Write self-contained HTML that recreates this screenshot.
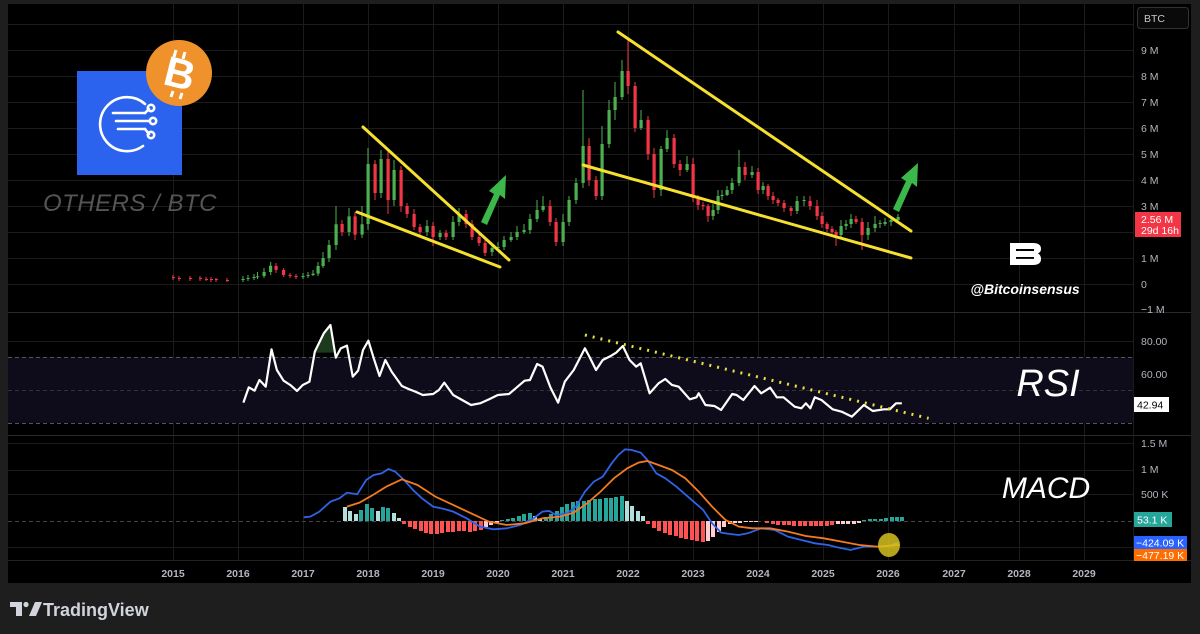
<!DOCTYPE html>
<html><head><meta charset="utf-8"><style>
html,body{margin:0;padding:0;background:#1e1e1e;width:1200px;height:634px;overflow:hidden}
svg text{font-family:"Liberation Sans",sans-serif}
</style></head><body>
<svg width="1200" height="634" viewBox="0 0 1200 634" xmlns="http://www.w3.org/2000/svg">
<rect x="0" y="0" width="1200" height="634" fill="#1e1e1e"/>
<rect x="8" y="4" width="1183" height="579" fill="#000"/>
<!-- grid -->
<g stroke="#1b1b1b" stroke-width="1">
<path d="M8 24.5H1133M8 50.5H1133M8 76.5H1133M8 102.5H1133M8 128.5H1133M8 154.5H1133M8 180.5H1133M8 206.5H1133M8 232.5H1133M8 258.5H1133M8 284.5H1133M8 341.5H1133M8 374.5H1133M8 443.5H1133M8 470.5H1133M8 494.5H1133M8 547.5H1133"/>
<path d="M173.5 4V560M238.5 4V560M303.5 4V560M368.5 4V560M433.5 4V560M498.5 4V560M563.5 4V560M628.5 4V560M693.5 4V560M758.5 4V560M823.5 4V560M888.5 4V560M954.5 4V560M1019.5 4V560M1084.5 4V560"/>
</g>
<line x1="8" y1="312.5" x2="1191" y2="312.5" stroke="#2a2a2a"/>
<line x1="8" y1="435.5" x2="1191" y2="435.5" stroke="#2a2a2a"/>
<line x1="8" y1="560.5" x2="1191" y2="560.5" stroke="#222"/>
<line x1="1133.5" y1="4" x2="1133.5" y2="560" stroke="#1c1c1c"/>
<!-- RSI band -->
<rect x="8" y="357" width="1125" height="66" fill="#0e0c1a"/>
<line x1="8" y1="357.5" x2="1133" y2="357.5" stroke="#555" stroke-dasharray="4,3"/>
<line x1="8" y1="390.5" x2="1133" y2="390.5" stroke="#333" stroke-dasharray="4,3"/>
<line x1="8" y1="423.5" x2="1133" y2="423.5" stroke="#555" stroke-dasharray="4,3"/>
<line x1="8" y1="521.5" x2="1133" y2="521.5" stroke="#444" stroke-dasharray="4,3"/>
<!-- candles: red -->
<g fill="#f23645" stroke="#f23645">
<path stroke-width="1" fill="none" d="M173 275V280M179 276V281M190 276V281M200 276V281M206 277V281M211 277V282M216 278V282M227 278V282M276 263V273M283.7 268V277M290 273V278M296 274V279M342 220V236M355 212V240M375 160V200M388 150V214M401 166V212M407 203V218M414 209V230M420 224V236M433 222V246M446 230V240M466 210V228M472 220V240M479 234V246M485 240V256M550 200V226M556 218V246M589 138V186M596 176V200M628 40V94M635 82V132M648 116V160M654 148V198M674 134V168M680 160V176M693 158V202M698 195V210M703 202V210M708 204V222M745 162V180M758 168V194M768 184V200M773 192V204M778 198V206M784 200V212M791 206V216M810 196V210M817 200V220M822 212V228M827 222V232M832 226V234M836 230V246M856 216V224M862 218V250"/>
<path stroke="none" d="M172 277h3v1h-3zM178 278h3v1h-3zM189 278h3v1h-3zM199 278h3v1h-3zM205 279h3v1h-3zM210 279h3v1h-3zM215 279h3v1h-3zM226 280h3v1h-3zM274.5 266h3.2v4h-3.2zM282 270h3.2v5h-3.2zM288.5 275h3.2v1h-3.2zM294.5 276h3.2v1h-3.2zM340.5 224h3.2v8h-3.2zM353.5 216.4h3.2v18.2h-3.2zM373.5 164h3.2v29h-3.2zM386.5 159h3.2v41h-3.2zM399.5 170h3.2v36h-3.2zM405.5 206h3.2v8h-3.2zM412.5 214h3.2v13h-3.2zM418.5 227h3.2v5h-3.2zM431.5 226h3.2v11h-3.2zM444.5 233h3.2v4h-3.2zM464.5 214h3.2v10h-3.2zM470.5 224h3.2v13h-3.2zM477.5 237h3.2v6h-3.2zM483.5 243h3.2v10h-3.2zM548.5 206h3.2v16h-3.2zM554.5 222h3.2v20h-3.2zM587.5 146h3.2v34h-3.2zM594.5 180h3.2v16h-3.2zM626.5 71h3.2v15h-3.2zM633.5 86h3.2v42h-3.2zM646.5 120h3.2v34h-3.2zM652.5 154h3.2v36h-3.2zM672.5 138h3.2v26h-3.2zM678.5 164h3.2v6h-3.2zM691.5 164h3.2v34h-3.2zM696.5 198h3.2v7h-3.2zM701.5 205h3.2v1h-3.2zM706.5 206h3.2v10h-3.2zM743.5 167h3.2v8h-3.2zM756.5 172h3.2v18h-3.2zM766.5 186h3.2v10h-3.2zM771.5 196h3.2v4h-3.2zM776.5 200h3.2v3h-3.2zM782.5 203h3.2v5h-3.2zM789.5 208h3.2v3h-3.2zM808.5 201h3.2v5h-3.2zM815.5 206h3.2v10h-3.2zM820.5 216h3.2v8h-3.2zM825.5 224h3.2v5h-3.2zM830.5 229h3.2v3h-3.2zM834.5 232h3.2v3h-3.2zM854.5 219h3.2v3h-3.2zM860.5 222h3.2v13h-3.2z"/>
</g>
<!-- candles: green -->
<g fill="#4caf50" stroke="#4caf50">
<path stroke-width="1" fill="none" d="M243 276V282M248 275V281M254 274V280M257.5 272V279M264 268V278M270.7 262V275M303 273V279M308 272V278M313 270V276M318 262V276M323 252V268M329 240V262M336 206V250M349 208V236M362 206V238M368 148V230M381 150V198M394 160V206M427 220V236M440 230V240M453 216V240M459 208V226M492 244V256M498 242V250M504 236V250M511 232V242M517 226V240M524 224V234M530 214V234M537 200V222M543 196V212M563 214V246M569 196V226M576 178V204M583 90V188M602 126V200M609 100V148M615 82V120M622 60V100M641 110V130M661 146V196M667 130V152M687 156V172M713 204V220M718 190V214M722 190V200M727 186V196M732 178V194M739 150V186M752 166V178M763 182V194M797 196V214M804 196V206M841 220V238M846 220V230M851 214V228M868 222V240M875 216V232M880 220V228M885 218V226M891 216V226M898 214V222"/>
<path stroke="none" d="M241.5 279h3.2v1h-3.2zM246.5 278h3.2v1h-3.2zM252.5 277h3.2v1h-3.2zM256 276.2h3.2v1h-3.2zM262.5 272h3.2v4h-3.2zM269 265.8h3.2v6.2h-3.2zM301.5 276h3.2v1h-3.2zM306.5 275h3.2v1h-3.2zM311.5 273.6h3.2v1.4h-3.2zM316.5 266h3.2v7.6h-3.2zM321.5 258h3.2v8h-3.2zM327.5 245h3.2v13h-3.2zM334.5 224.2h3.2v20.8h-3.2zM347.5 216.4h3.2v15.6h-3.2zM360.5 224.2h3.2v10.4h-3.2zM366.5 164h3.2v60h-3.2zM379.5 159h3.2v34h-3.2zM392.5 170h3.2v30h-3.2zM425.5 226h3.2v6h-3.2zM438.5 233h3.2v4h-3.2zM451.5 222h3.2v15h-3.2zM457.5 214h3.2v8h-3.2zM490.5 248h3.2v4h-3.2zM496.5 247h3.2v1h-3.2zM502.5 240h3.2v7h-3.2zM509.5 237h3.2v3h-3.2zM515.5 232h3.2v5h-3.2zM522.5 230h3.2v2h-3.2zM528.5 219h3.2v11h-3.2zM535.5 210h3.2v9h-3.2zM541.5 206h3.2v4h-3.2zM561.5 222h3.2v20h-3.2zM567.5 200h3.2v22h-3.2zM574.5 183h3.2v17h-3.2zM581.5 146h3.2v37h-3.2zM600.5 144h3.2v52h-3.2zM607.5 110h3.2v34h-3.2zM613.5 97h3.2v13h-3.2zM620.5 71h3.2v26h-3.2zM639.5 120h3.2v8h-3.2zM659.5 149h3.2v41h-3.2zM665.5 138h3.2v11h-3.2zM685.5 164h3.2v6h-3.2zM711.5 210h3.2v6h-3.2zM716.5 196h3.2v14h-3.2zM720.5 195h3.2v1h-3.2zM725.5 190h3.2v5h-3.2zM730.5 183h3.2v7h-3.2zM737.5 167h3.2v16h-3.2zM750.5 172h3.2v3h-3.2zM761.5 186h3.2v4h-3.2zM795.5 201h3.2v10h-3.2zM802.5 200h3.2v1h-3.2zM839.5 226h3.2v9h-3.2zM844.5 224h3.2v2h-3.2zM849.5 219h3.2v5h-3.2zM866.5 228h3.2v7h-3.2zM873.5 224h3.2v4h-3.2zM878.5 223h3.2v1h-3.2zM883.5 222h3.2v2h-3.2zM889.5 220h3.2v2h-3.2zM896.5 217h3.2v3h-3.2z"/>
</g>
<!-- trendlines -->
<g stroke="#f5e030" stroke-width="3" stroke-linecap="round">
<line x1="363" y1="127" x2="509" y2="260"/>
<line x1="357" y1="212" x2="500" y2="267"/>
<line x1="618" y1="32" x2="911" y2="231"/>
<line x1="583" y1="165" x2="911" y2="258"/>
</g>
<g fill="#3cb84a">
<path d="M481 222 L494 194 L489 191 L506 175 L505 199 L500 195 L487 225 Z"/>
<path d="M893 209 L906 181 L901 178 L918 163 L917 187 L912 183 L899 212 Z"/>
</g>
<!-- RSI -->
<g transform="translate(230,310) scale(0.4464,0.3333)">
<polygon points="190,128 210,70 225,45 236,128" fill="#1d3a1d"/>
<polyline fill="none" stroke="#fff" stroke-width="2.2" vector-effect="non-scaling-stroke" stroke-linejoin="round" points="30,278 42,232 55,242 66,210 80,230 93,118 105,180 120,212 135,225 150,243 163,225 178,215 190,125 210,70 225,45 237,143 248,115 262,107 275,200 287,182 298,120 310,92 322,145 335,198 348,150 362,185 385,228 400,237 415,245 432,255 455,252 468,240 480,218 500,255 540,285 560,280 580,268 600,255 625,252 640,235 660,212 672,210 688,162 700,170 718,233 735,278 750,215 770,180 795,115 805,140 820,180 835,150 850,140 865,128 880,108 895,150 910,170 920,160 940,250 960,220 975,207 990,225 1005,230 1030,268 1045,262 1050,250 1065,285 1085,288 1100,300 1125,252 1135,255 1150,270 1175,228 1190,250 1210,233 1225,262 1240,262 1265,290 1280,295 1290,280 1300,295 1310,262 1325,270 1350,298 1370,305 1393,320 1420,285 1440,303 1465,298 1478,298 1492,280 1505,280"/>
<line x1="795" y1="75" x2="1565" y2="325" stroke="#e8e040" stroke-width="3" stroke-dasharray="2,6" vector-effect="non-scaling-stroke"/>
</g>
<!-- MACD histogram -->
<path fill="#b2dfdb" d="M343 507h4v14h-4zM348 511h4v10h-4zM354 514h4v7h-4zM376 511h4v10h-4zM392 513h4v8h-4zM397 518h4v3h-4zM533 516h4v5h-4zM538 519h4v2h-4zM625 501h4v20h-4zM630 506h4v15h-4zM636 511h4v10h-4zM641 516h4v5h-4z"/>
<path fill="#26a69a" d="M359 510h4v11h-4zM365 504h4v17h-4zM370 508h4v13h-4zM381 507h4v14h-4zM386 508h4v13h-4zM500 520h4v1h-4zM506 519h4v2h-4zM511 518h4v3h-4zM517 516h4v5h-4zM522 514h4v7h-4zM528 513h4v8h-4zM544 517h4v4h-4zM549 514h4v7h-4zM555 511h4v10h-4zM560 507h4v14h-4zM565 504h4v17h-4zM571 502h4v19h-4zM576 501h4v20h-4zM582 501h4v20h-4zM587 500h4v21h-4zM593 499h4v22h-4zM598 499h4v22h-4zM604 498h4v23h-4zM609 498h4v23h-4zM614 497h4v24h-4zM620 496h4v25h-4zM862 520h4v1h-4zM868 519h4v2h-4zM873 519h4v2h-4zM879 519h4v2h-4zM884 518h4v3h-4zM890 517h4v4h-4zM895 517h4v4h-4zM900 517h4v4h-4z"/>
<path fill="#ff5252" d="M402 521h4v3h-4zM408 521h4v6h-4zM413 521h4v8h-4zM419 521h4v10h-4zM424 521h4v12h-4zM429 521h4v13h-4zM435 521h4v13h-4zM440 521h4v12h-4zM446 521h4v11h-4zM451 521h4v11h-4zM457 521h4v10h-4zM462 521h4v10h-4zM468 521h4v11h-4zM473 521h4v10h-4zM479 521h4v9h-4zM646 521h4v3h-4zM652 521h4v7h-4zM657 521h4v10h-4zM663 521h4v12h-4zM668 521h4v14h-4zM674 521h4v15h-4zM679 521h4v17h-4zM684 521h4v18h-4zM690 521h4v19h-4zM695 521h4v20h-4zM701 521h4v21h-4zM765 521h4v2h-4zM771 521h4v3h-4zM776 521h4v4h-4zM782 521h4v4h-4zM787 521h4v4h-4zM792 521h4v5h-4zM798 521h4v5h-4zM803 521h4v5h-4zM809 521h4v5h-4zM814 521h4v5h-4zM819 521h4v5h-4zM825 521h4v5h-4zM830 521h4v4h-4z"/>
<path fill="#ffcdd2" d="M484 521h4v6h-4zM489 521h4v4h-4zM495 521h4v2h-4zM706 521h4v20h-4zM711 521h4v16h-4zM717 521h4v11h-4zM722 521h4v6h-4zM728 521h4v3h-4zM733 521h4v2h-4zM738 521h4v2h-4zM744 521h4v1h-4zM749 521h4v1h-4zM754 521h4v1h-4zM836 521h4v3h-4zM841 521h4v3h-4zM846 521h4v3h-4zM852 521h4v3h-4zM857 521h4v2h-4z"/>
<g transform="translate(230,310) scale(0.4464,0.3333)">
<polyline fill="none" stroke="#2f63e8" stroke-width="1.8" vector-effect="non-scaling-stroke" points="165,622 180,620 200,605 225,575 245,565 262,548 285,553 305,510 322,495 340,490 355,477 370,485 390,510 410,540 430,565 455,590 480,597 500,605 530,625 560,650 590,658 620,655 650,645 680,625 700,605 715,603 730,615 755,610 775,590 795,545 815,515 835,500 855,460 870,435 885,418 900,420 920,428 935,450 955,490 975,505 1000,530 1030,565 1060,600 1080,640 1100,668 1120,672 1140,675 1160,670 1190,655 1220,660 1250,680 1280,690 1310,700 1340,705 1360,712 1390,720 1420,710 1450,710 1475,708 1500,697"/>
<polyline fill="none" stroke="#f47a20" stroke-width="1.8" vector-effect="non-scaling-stroke" points="262,590 290,578 320,555 350,530 385,508 420,525 460,560 500,585 540,610 580,635 620,645 660,640 700,625 740,620 770,608 800,580 830,545 860,505 890,475 915,458 935,453 960,465 990,480 1020,505 1050,545 1080,590 1110,630 1140,650 1170,655 1210,655 1250,665 1290,678 1330,685 1370,695 1410,705 1450,710 1500,705"/>
</g>
<ellipse cx="889" cy="545" rx="11" ry="12" fill="#d6c21e" opacity="0.85"/>
<!-- axis labels -->
<g fill="#b2b5be" font-size="10.5">
<text x="1141" y="54">9 M</text><text x="1141" y="80">8 M</text><text x="1141" y="106">7 M</text>
<text x="1141" y="132">6 M</text><text x="1141" y="158">5 M</text><text x="1141" y="184">4 M</text>
<text x="1141" y="210">3 M</text><text x="1141" y="262">1 M</text><text x="1141" y="288">0</text>
<text x="1141" y="313">−1 M</text>
<text x="1141" y="345">80.00</text><text x="1141" y="378">60.00</text>
<text x="1141" y="447">1.5 M</text><text x="1141" y="473">1 M</text><text x="1141" y="498">500 K</text>
</g>
<g fill="#b2b5be" font-size="10.5" text-anchor="middle" font-weight="bold">
<text x="173" y="577">2015</text><text x="238" y="577">2016</text><text x="303" y="577">2017</text><text x="368" y="577">2018</text><text x="433" y="577">2019</text><text x="498" y="577">2020</text><text x="563" y="577">2021</text><text x="628" y="577">2022</text><text x="693" y="577">2023</text><text x="758" y="577">2024</text><text x="823" y="577">2025</text><text x="888" y="577">2026</text><text x="954" y="577">2027</text><text x="1019" y="577">2028</text><text x="1084" y="577">2029</text>
</g>
<rect x="1137.5" y="7.5" width="51" height="21" rx="3" fill="#0a0a0a" stroke="#333"/>
<text x="1144" y="22" fill="#c8c8c8" font-size="10.5">BTC</text>
<rect x="1135" y="212" width="46" height="25" fill="#f23645"/>
<text x="1141" y="223" fill="#fff" font-size="10.5">2.56 M</text>
<text x="1141" y="234" fill="#fff" font-size="10.5">29d 16h</text>
<rect x="1134" y="397" width="35" height="15" fill="#fff"/>
<text x="1137" y="408.5" fill="#000" font-size="10.5">42.94</text>
<rect x="1134" y="512" width="38" height="15" fill="#26a69a"/>
<text x="1137" y="523.5" fill="#fff" font-size="10.5">53.1 K</text>
<rect x="1134" y="536" width="53" height="13" fill="#2962ff"/>
<text x="1136" y="546.5" fill="#fff" font-size="10.5">−424.09 K</text>
<rect x="1134" y="549" width="53" height="12" fill="#ff6d00"/>
<text x="1136" y="559" fill="#fff" font-size="10.5">−477.19 K</text>
<!-- overlays -->
<text x="1048" y="396" fill="#fff" font-size="38" font-style="italic" text-anchor="middle">RSI</text>
<text x="1046" y="498" fill="#fff" font-size="30" font-style="italic" text-anchor="middle">MACD</text>
<text x="130" y="211" fill="#555" font-size="24" font-style="italic" text-anchor="middle" letter-spacing="0.5">OTHERS / BTC</text>
<!-- logo -->
<rect x="77" y="71" width="105" height="104" fill="#2b63ee"/>
<g stroke="#fff" stroke-width="2.6" fill="none" stroke-linecap="round">
<path d="M145 104 A27 27 0 1 0 143 146"/>
<line x1="113" y1="113" x2="145" y2="113"/><line x1="116" y1="121" x2="150" y2="121"/><line x1="118" y1="129" x2="145" y2="129"/>
<path d="M145 113 L149 109"/><path d="M145 129 L149 134"/>
<circle cx="151" cy="108" r="3.2"/><circle cx="153" cy="121" r="3.2"/><circle cx="151" cy="135" r="3.2"/>
</g>
<circle cx="179" cy="73" r="33" fill="#f0922b"/>
<text x="180" y="88" fill="#fff" font-size="42" font-weight="bold" text-anchor="middle" transform="rotate(14 180 73)">B</text>
<g stroke="#fff" stroke-width="3"><line x1="176" y1="50" x2="174" y2="57"/><line x1="185" y1="52" x2="183" y2="59"/><line x1="173" y1="91" x2="171" y2="97"/><line x1="182" y1="93" x2="180" y2="99"/></g>
<!-- Bitcoinsensus -->
<path d="M1010 243 H1033 Q1041 243 1041 249 Q1041 252 1038 253.5 Q1041 255 1041 259 Q1041 265 1033 265 H1010 Z M1016 249 V251 H1034 V249 Z M1016 257 V259 H1034 V257 Z" fill="#fff" fill-rule="evenodd"/>
<text x="1025" y="294" fill="#fff" font-size="14" font-style="italic" font-weight="bold" text-anchor="middle">@Bitcoinsensus</text>
<!-- TradingView -->
<g fill="#d1d4dc">
<path d="M10 602 H22 V616 H16 V607 H10 Z"/><circle cx="26" cy="604.5" r="2.6"/>
<path d="M29 616 L35 602 H42 L36 616 Z"/>
</g>
<text x="43" y="616" fill="#d1d4dc" font-size="18" font-weight="bold">TradingView</text>
</svg>
</body></html>
